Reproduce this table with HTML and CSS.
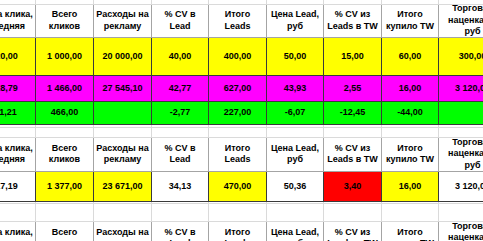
FILE: index.html
```html
<!DOCTYPE html>
<html lang="ru">
<head>
<meta charset="utf-8">
<title>Лист</title>
<link rel="stylesheet" href="styles.css">
</head>
<body>
<div class="sheet">
<table class="grid">
<colgroup>
<col class="w58"><col class="w58"><col class="w58"><col class="w57"><col class="w58"><col class="w57"><col class="w58"><col class="w57"><col class="w68">
</colgroup>
<tbody>
<tr class="gap r4"><td></td><td></td><td></td><td></td><td></td><td></td><td></td><td></td><td></td></tr>
<tr class="head r33">
<th><div class="hc hc33">Цена клика,<br>средняя</div></th>
<th><div class="hc hc33">Всего<br>кликов</div></th>
<th><div class="hc hc33">Расходы на<br>рекламу</div></th>
<th><div class="hc hc33">% CV в<br>Lead</div></th>
<th><div class="hc hc33">Итого<br>Leads</div></th>
<th><div class="hc hc33">Цена Lead,<br>руб</div></th>
<th><div class="hc hc33">% CV из<br>Leads в TW</div></th>
<th><div class="hc hc33">Итого<br>купило TW</div></th>
<th><div class="hc hc33">Торговая<br>наценка на<br>руб</div></th>
</tr>
<tr class="data r38 yellow">
<td>20,00</td><td>1 000,00</td><td>20 000,00</td><td>40,00</td><td>400,00</td><td>50,00</td><td>15,00</td><td>60,00</td><td>300,00</td>
</tr>
<tr class="data r26 magenta">
<td>18,79</td><td>1 466,00</td><td>27 545,10</td><td>42,77</td><td>627,00</td><td>43,93</td><td>2,55</td><td>16,00</td><td>3 120,00</td>
</tr>
<tr class="data r23 green">
<td>-1,21</td><td>466,00</td><td></td><td>-2,77</td><td>227,00</td><td>-6,07</td><td>-12,45</td><td>-44,00</td><td></td>
</tr>
<tr class="gap r3"><td></td><td></td><td></td><td></td><td></td><td></td><td></td><td></td><td></td></tr>
<tr class="gap r10"><td></td><td></td><td></td><td></td><td></td><td></td><td></td><td></td><td></td></tr>
<tr class="head r34">
<th><div class="hc hc34">Цена клика,<br>средняя</div></th>
<th><div class="hc hc34">Всего<br>кликов</div></th>
<th><div class="hc hc34">Расходы на<br>рекламу</div></th>
<th><div class="hc hc34">% CV в<br>Lead</div></th>
<th><div class="hc hc34">Итого<br>Leads</div></th>
<th><div class="hc hc34">Цена Lead,<br>руб</div></th>
<th><div class="hc hc34">% CV из<br>Leads в TW</div></th>
<th><div class="hc hc34">Итого<br>купило TW</div></th>
<th><div class="hc hc34">Торговая<br>наценка на<br>руб</div></th>
</tr>
<tr class="data r30">
<td>17,19</td><td class="yellow">1 377,00</td><td class="yellow">23 671,00</td><td>34,13</td><td class="yellow">470,00</td><td>50,36</td><td class="red">3,40</td><td class="yellow">16,00</td><td>3 120,00</td>
</tr>
<tr class="gap r2"><td></td><td></td><td></td><td></td><td></td><td></td><td></td><td></td><td></td></tr>
<tr class="gap r18"><td></td><td></td><td></td><td></td><td></td><td></td><td></td><td></td><td></td></tr>
<tr class="head r34">
<th><div class="hc hc34">Цена клика,<br>средняя</div></th>
<th><div class="hc hc34">Всего<br>кликов</div></th>
<th><div class="hc hc34">Расходы на<br>рекламу</div></th>
<th><div class="hc hc34">% CV в<br>Lead</div></th>
<th><div class="hc hc34">Итого<br>Leads</div></th>
<th><div class="hc hc34">Цена Lead,<br>руб</div></th>
<th><div class="hc hc34">% CV из<br>Leads в TW</div></th>
<th><div class="hc hc34">Итого<br>купило TW</div></th>
<th><div class="hc hc34">Торговая<br>наценка на<br>руб</div></th>
</tr>
</tbody>
</table>
</div>
</body>
</html>
```

FILE: styles.css
```css
html, body {
  margin: 0;
  padding: 0;
  background: #ffffff;
}

.sheet {
  width: 483px;
  height: 241px;
  overflow: hidden;
}

.grid {
  border-collapse: collapse;
  table-layout: fixed;
  width: 529px;
  margin-left: -23px;
  font: bold 9px/11px "Liberation Sans", Arial, sans-serif;
  color: #000;
}

.w58 { width: 58px; }
.w57 { width: 57px; }
.w68 { width: 68px; }

.grid td,
.grid th {
  padding: 0;
  text-align: center;
  vertical-align: middle;
  white-space: nowrap;
  overflow: hidden;
}

.head th {
  background: #fff;
  border: 1px solid #a4a4a4;
  font-weight: bold;
}

.hc {
  display: flex;
  align-items: center;
  justify-content: center;
  overflow: hidden;
  line-height: 11.5px;
}

.hc33 { height: 32px; }
.hc34 { height: 33px; }

.data td {
  border: 1px solid #3a3a3a;
}

.gap td {
  border-left: 1px solid #dadada;
  border-right: 1px solid #dadada;
  border-bottom: 1px solid #dadada;
  border-top: 0;
}

.r2 { height: 2px; }
.r3 { height: 3px; }
.r4 { height: 4px; }
.r10 { height: 10px; }
.r18 { height: 18px; }
.r23 { height: 23px; }
.r26 { height: 26px; }
.r30 { height: 30px; }
.r33 { height: 33px; }
.r34 { height: 34px; }
.r38 { height: 38px; }

.yellow { background: #ffff00; }
.magenta { background: #ff00ff; }
.green { background: #00ff00; }
.red { background: #ff0000; }
```
